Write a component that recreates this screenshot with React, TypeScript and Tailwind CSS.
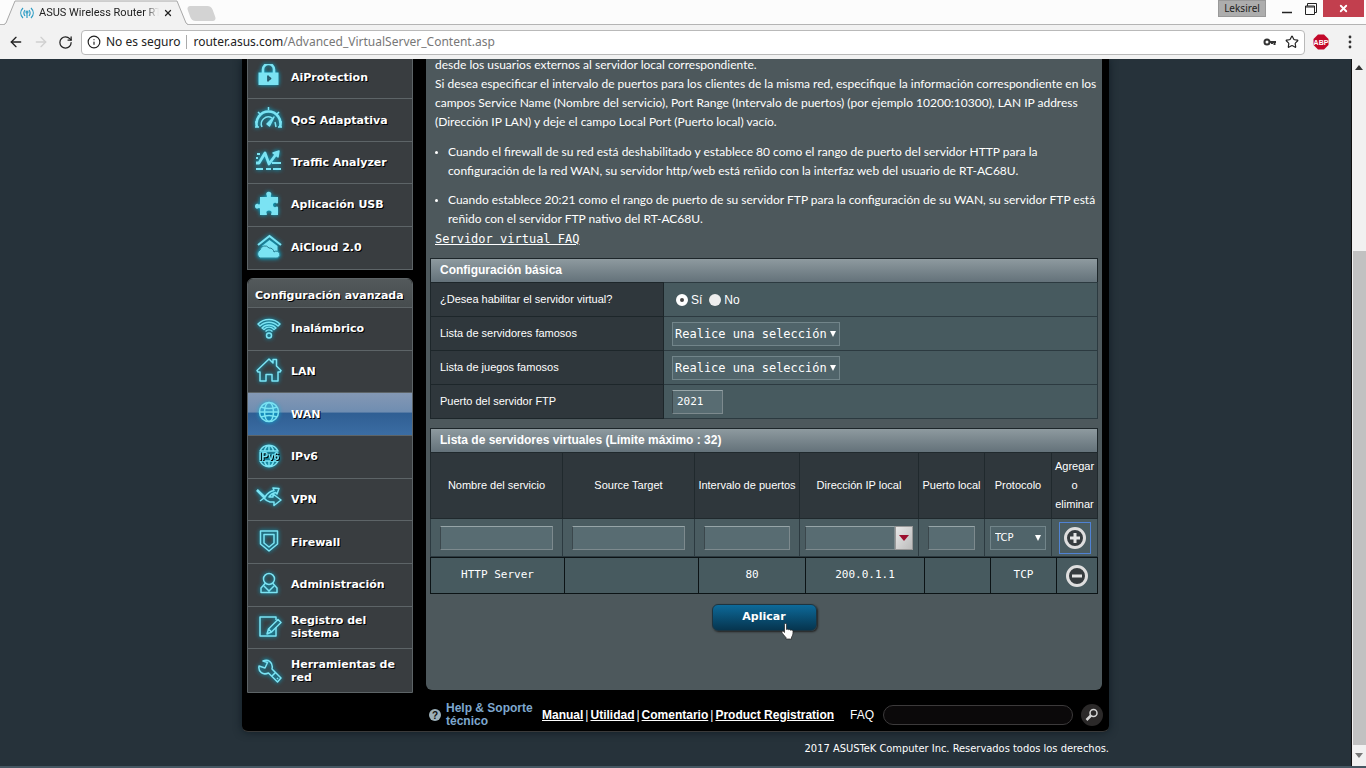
import { useState } from "react";
import type { ReactNode } from "react";
import { ArrowLeft, ArrowRight, Info, RotateCw, Star, X } from "lucide-react";

interface MenuItem {
    label: string;
    icon: ReactNode;
    active?: boolean;
}

const generalMenu: MenuItem[] = [
    {
        label: "AiProtection",
        icon: (
            <>
                <path d="M8 10V5.500a5.500 5.500 0 0 1 11 0V10" strokeWidth="2.6" />
                <path d="M3.500 8.500h20V21h-20z" fill="currentColor" stroke="none" />
                <path d="M13 11.500v6M13.500 13l2 1.500-2 1.500" stroke="#24586a" strokeWidth="1.8" />
            </>
        ),
    },
    {
        label: "QoS Adaptativa",
        icon: (
            <>
                <path d="M2 21a12 12 0 1 1 23 0" strokeWidth="2.600" />
                <path d="M7 21a7 7 0 0 1 10-9" strokeWidth="1.500" />
                <path d="M20 16l1 5" strokeWidth="1.500" />
                <path d="M13.500 4V1M5 8L3 6M22 8l2-2M2 16H0M25 16h2M0 21h4M23 21h4" strokeWidth="1.500" />
                <path d="M12 18l7-7-4.500 9z" fill="currentColor" />
            </>
        ),
    },
    {
        label: "Traffic Analyzer",
        icon: (
            <>
                <path d="M1 15h3l6-10 4 11 8-11" strokeWidth="2.800" />
                <path d="M18 5l6-2-1 6z" fill="currentColor" />
                <path d="M2 6h3M1 10h2M17 15h9M1 21h7M11 21h5M18 21h8" strokeWidth="2" />
            </>
        ),
    },
    {
        label: "Aplicación USB",
        icon: (
            <path
                d="M5 6h6c1 0 1.200-.8.700-1.600C10.500 2 12 .8 13.800.800S17 2 16 4.400c-.5.800-.2 1.600.700 1.600H23v5.500c0 1-1 1.200-1.700.7-2-1-3.300.2-3.300 1.800s1.500 2.800 3.300 1.800c.8-.5 1.700-.2 1.700.700V24h-6c-1 0-1.200-.8-.7-1.600 1-2-.5-3-2.300-3s-3.300 1-2.300 3c.5.800.3 1.600-.7 1.600H5v-6c0-1-.8-1.200-1.600-.7C1.500 18.300 0 17 0 15.200s1.500-3 3.400-2c.8.500 1.600.2 1.600-.700z"
                fill="currentColor"
                stroke="none"
            />
        ),
    },
    {
        label: "AiCloud 2.0",
        icon: (
            <>
                <path d="M3 11L14.500 2 26 11" strokeWidth="2.200" />
                <path d="M7 12l7.500-6 8 6v5H14z" fill="currentColor" stroke="none" />
                <path d="M5 24a4.500 4.500 0 0 1 0-8 5 5 0 0 1 9-2 5 5 0 0 1 5 4 3.500 3.500 0 1 1 1.500 6z" fill="currentColor" stroke="#2b7f92" strokeWidth="1" />
            </>
        ),
    },
];

const advancedMenu: MenuItem[] = [
    {
        label: "Inalámbrico",
        icon: (
            <>
                <path d="M3 9c6-6 16-6 22 0l-2 2c-5-5-13-5-18 0z" />
                <path d="M7 13c4-4 10-4 14 0l-2 1.500c-3-3-7-3-10 0z" />
                <path d="M10.500 16.500c2-2 5-2 7 0" />
                <circle cx="14" cy="20.500" r="2.500" />
            </>
        ),
    },
    {
        label: "LAN",
        icon: <path d="M2 13.500L14 2l4 4V2.500h3.500V9l4.500 4.500-1 1.500h-2v9h-6v-6.500h-6V24H5v-9H3z" />,
    },
    {
        label: "WAN",
        active: true,
        icon: (
            <>
                <circle cx="14" cy="12" r="9.500" />
                <ellipse cx="14" cy="12" rx="4.500" ry="9.500" />
                <path d="M4.500 12h19M6 7c5 2 11 2 16 0M6 17c5-2 11-2 16 0" />
            </>
        ),
    },
    {
        label: "IPv6",
        icon: (
            <>
                <path d="M5 8a10 10 0 0 1 18 0zM5 18a10 10 0 0 0 18 0zM14 2.500V8M14 18v5.500M9.500 8c.5-2.500 2-5 4.500-5.500 2.500.5 4 3 4.500 5.500M9.500 18c.5 2.500 2 5 4.500 5.500 2.500-.5 4-3 4.500-5.500" />
                <text x="14" y="16.500" fontSize="10" fontWeight="bold" textAnchor="middle" fill="currentColor" stroke="none" fontFamily="Liberation Sans, sans-serif">
                    IPv6
                </text>
            </>
        ),
    },
    {
        label: "VPN",
        icon: (
            <>
                <path d="M2 5l8 7c3-5 6-6 9-6.500L18 3l6 .5L22 9l-1.500-1.500c-3 .8-5 2-6.500 4.500h4V9l8 6-7 5.500V17h-4c-2.500-.5-4.500-2-6-4L5 16" />
                <path d="M2 5l8 8" strokeWidth="2.500" />
            </>
        ),
    },
    {
        label: "Firewall",
        icon: (
            <>
                <path d="M5.500 3h17v13L14 23l-8.500-7z" />
                <path d="M9 6.500h10V15l-5 4-5-4z" />
            </>
        ),
    },
    {
        label: "Administración",
        icon: (
            <>
                <circle cx="14" cy="8" r="5.500" />
                <path d="M10.500 12L6 17v4.500h16V17l-4.500-5M9 15l5 5 5-5" />
            </>
        ),
    },
    {
        label: "Registro del sistema",
        icon: (
            <>
                <path d="M21 14v9H5V4h16v3" />
                <path d="M12 21l1.500-5L23 6.500l3 3-9.500 9.500zM13.500 16l3 3" />
            </>
        ),
    },
    {
        label: "Herramientas de red",
        icon: (
            <>
                <path d="M4 9l6 2 2.500-5.500L8 4c5-2 10.500 1 9 8l9 9-3.500 4-9-9C8 18.500 3 15 4 9z" />
                <path d="M17 19l3.500-3.500M22 21l1 1" />
            </>
        ),
    },
];

const serverColumns = [
    { label: "Nombre del servicio", width: "w-[132px]" },
    { label: "Source Target", width: "w-[132px]" },
    { label: "Intervalo de puertos", width: "w-[105px]" },
    { label: "Dirección IP local", width: "w-[119px]" },
    { label: "Puerto local", width: "w-[66px]" },
    { label: "Protocolo", width: "w-[67px]" },
    { label: "Agregar o eliminar", width: "w-[46px]" },
];

const servers = [{ name: "HTTP Server", source: "", range: "80", ip: "200.0.1.1", port: "", protocol: "TCP" }];

const inputClass =
    "block h-[24px] w-full border border-[#7d8a8e] border-t-[#97a5a8] border-l-[#3b474c] bg-[#586c72] px-1 font-['DejaVu_Sans_Mono',monospace] text-[11px] text-white outline-none";

function BrowserBar() {
    return (
        <header className="shrink-0 bg-[#fcfcfc] font-['Noto_Sans',sans-serif] text-[#222]">
            <div className="flex h-[25px] items-start justify-between border-b border-[#b4b4b4]">
                <div className="flex">
                    <div className="relative ml-1 flex h-[25px] w-[184px] items-center gap-1 pl-4">
                        <svg className="absolute inset-0 h-full w-full" viewBox="0 0 184 25" aria-hidden="true">
                            <path d="M0 25L2 23 11 1h162l9 22 2 2z" fill="#f2f2f2" />
                            <path d="M0 24.500L2 23 11 1h162l9 22 2 1.500" fill="none" stroke="#a8a8a8" />
                        </svg>
                        <svg className="relative h-[14px] w-[14px] shrink-0 text-[#2d9cc4]" viewBox="0 0 14 14" fill="none" stroke="currentColor" strokeWidth="1.200" aria-hidden="true">
                            <path d="M3 2C0 5 0 9 3 12M5 4C3.500 6 3.500 8 5 10M11 2c3 3 3 7 0 10M9 4c1.500 2 1.500 4 0 6M7 7v5" />
                            <circle cx="7" cy="6" r="1" />
                        </svg>
                        <span className="relative w-[121px] pl-px font-['Roboto',sans-serif] text-[11px] leading-4 whitespace-nowrap [mask-image:linear-gradient(to_right,black_88%,transparent)]">
                            ASUS Wireless Router RT
                        </span>
                        <button type="button" aria-label="Cerrar pestaña" className="relative">
                            <X size={10} strokeWidth={3} />
                        </button>
                    </div>
                    <button type="button" aria-label="Nueva pestaña" className="mt-[6px] ml-px h-[15px] w-[25px] skew-x-[20deg] rounded-sm bg-[#d3d3d3]" />
                </div>
                <div className="flex items-start">
                    <span className="mr-[9px] h-[17px] w-[48px] border border-[#999] bg-[#adadad] text-center text-[10px] leading-[15px] text-[#222]">Leksirel</span>
                    <button type="button" aria-label="Minimizar" className="flex h-[17px] w-6 items-center justify-center">
                        <svg width="12" height="12" viewBox="0 0 12 12"><path d="M1 9.500h10" stroke="#222" strokeWidth="1.500" /></svg>
                    </button>
                    <button type="button" aria-label="Restaurar" className="flex h-[17px] w-6 items-center justify-center">
                        <svg width="12" height="12" viewBox="0 0 12 12" fill="none" stroke="#222"><path d="M.5 3h9v8.500h-9zM.5 4h9M2.500 3V.500h9v9h-2" /></svg>
                    </button>
                    <button type="button" aria-label="Cerrar" className="mr-[2px] flex h-[17px] w-[41px] items-center justify-center bg-[#c23f4e] text-white">
                        <X size={11} strokeWidth={4} />
                    </button>
                </div>
            </div>
            <div className="flex h-[34px] items-center bg-[#f2f2f2] pr-2 pl-2">
                <button type="button" aria-label="Atrás" className="mr-[9px]"><ArrowLeft size={16} /></button>
                <button type="button" aria-label="Adelante" className="mr-[9px] text-[#d0d0d0]"><ArrowRight size={16} /></button>
                <button type="button" aria-label="Recargar" className="mr-2"><RotateCw size={15} /></button>
                <div className="flex h-[25px] flex-1 items-center rounded-sm border border-[#b9b9b9] bg-white px-[5px]">
                    <Info size={14} className="mr-[5px]" />
                    <span className="text-[12px]">No es seguro</span>
                    <span className="mx-[6px] h-[14px] w-px bg-[#aaa]" />
                    <span className="flex-1 text-[12px] text-[#777]"><span className="text-[#222]">router.asus.com</span>/Advanced_VirtualServer_Content.asp</span>
                    <svg className="mr-2" width="14" height="14" viewBox="0 0 14 14" fill="none" stroke="#333" strokeWidth="2" aria-hidden="true"><circle cx="4" cy="7" r="2.500" /><path d="M6.500 7H13M11.500 7v3M9 7v2" /></svg>
                    <Star size={14} />
                </div>
                <button type="button" aria-label="Adblock Plus" className="ml-2">
                    <svg width="16" height="16" viewBox="0 0 16 16">
                        <path d="M5 .5h6L15.500 5v6L11 15.500H5L.5 11V5z" fill="#c3092a" />
                        <text x="8" y="10.500" fontSize="7" fontWeight="bold" textAnchor="middle" fill="#fff" fontFamily="Liberation Sans, sans-serif">ABP</text>
                    </svg>
                </button>
                <button type="button" aria-label="Menú" className="ml-[13px]">
                    <svg width="16" height="16" viewBox="0 0 16 16" fill="#333"><circle cx="8" cy="3" r="1.400" /><circle cx="8" cy="8" r="1.400" /><circle cx="8" cy="13" r="1.400" /></svg>
                </button>
            </div>
        </header>
    );
}

function MenuLink({ item }: { item: MenuItem }) {
    return (
        <a
            href="#"
            aria-current={item.active ? "page" : undefined}
            className={
                item.active
                    ? "flex items-center border-b border-[#5d6467] bg-[linear-gradient(to_bottom,#8498b4,#6f8db1_46%,#2f5e93_47%,#3b6da3)]"
                    : "flex items-center border-b border-[#5d6467] bg-[#393d40] last:border-b-0"
            }
        >
            <svg
                className="mr-2 ml-[7px] h-[28px] w-[28px] shrink-0 text-[#7be3f3] drop-shadow-[0_0_2px_#00b8e0]"
                viewBox="0 0 28 28"
                fill="none"
                stroke="currentColor"
                strokeWidth="1.500"
                strokeLinejoin="round"
                aria-hidden="true"
            >
                {item.icon}
            </svg>
            <span className="pr-1 leading-[13px]">{item.label}</span>
        </a>
    );
}

function Sidebar() {
    return (
        <nav className="-mt-[3px] -mb-[3px] w-[166px] shrink-0 font-['DejaVu_Sans',sans-serif] text-[11px] font-bold text-white [text-shadow:1px_1px_0_#000]">
            <div className="grid h-[214px] auto-rows-fr border border-[#5d6467]">
                {generalMenu.map((item) => (
                    <MenuLink key={item.label} item={item} />
                ))}
            </div>
            <div className="mt-2 overflow-hidden rounded-t-md border border-[#5d6467]">
                <h2 className="h-[29px] border-b border-[#5d6467] bg-linear-to-b from-[#53595b] to-[#464c4e] pl-[7px] leading-[34px] whitespace-nowrap">Configuración avanzada</h2>
                <div className="grid h-96 auto-rows-fr">
                    {advancedMenu.map((item) => (
                        <MenuLink key={item.label} item={item} />
                    ))}
                </div>
            </div>
        </nav>
    );
}

function SelectBox({ id }: { id: string }) {
    return (
        <div className="relative w-[168px]">
            <select id={id} className="block h-[24px] w-full appearance-none border border-[#72858a] bg-[#50646a] pl-[2px] font-['DejaVu_Sans_Mono',monospace] text-[12px] text-white">
                <option>Realice una selección</option>
            </select>
            <Caret className="absolute top-[9px] right-[4px]" />
        </div>
    );
}

function Caret({ className }: { className: string }) {
    return (
        <svg className={`pointer-events-none h-[6px] w-[6px] ${className}`} viewBox="0 0 6 6" fill="#fff" aria-hidden="true">
            <path d="M0 0h6L3 6z" />
        </svg>
    );
}

function SectionTitle({ children }: { children: ReactNode }) {
    return (
        <h3 className="h-[24px] border border-b-0 border-[#1d262a] bg-linear-to-b from-[#8e9a9f] to-[#64727a] pl-[9px] text-[12px] leading-[23px] font-bold">{children}</h3>
    );
}

function SettingRow({ label, htmlFor, children }: { label: string; htmlFor?: string; children: ReactNode }) {
    return (
        <tr className="h-[34px]">
            <th scope="row" className="w-[233px] border border-[#1d262a] bg-[#2f373c] pl-[9px] text-left font-normal">
                <label htmlFor={htmlFor}>{label}</label>
            </th>
            <td className="border border-[#2c3a40] bg-[#475a5f] pl-2">{children}</td>
        </tr>
    );
}

function BasicConfig() {
    const [enabled, setEnabled] = useState(true);
    const [ftpPort, setFtpPort] = useState("2021");
    const radioClass = "h-[12px] w-[12px] appearance-none rounded-full bg-[#eee] checked:border-[4px] checked:border-white checked:bg-[#444]";

    return (
        <section className="mt-[9px]">
            <SectionTitle>Configuración básica</SectionTitle>
            <table className="w-full border-collapse text-[11px]">
                <tbody>
                    <SettingRow label="¿Desea habilitar el servidor virtual?" htmlFor="vs-on">
                        <div className="flex items-center gap-[3px] pl-1 text-[12px]">
                            <input id="vs-on" type="radio" name="vs" checked={enabled} onChange={() => setEnabled(true)} className={radioClass} />
                            <label htmlFor="vs-on" className="mr-1">Sí</label>
                            <input id="vs-off" type="radio" name="vs" checked={!enabled} onChange={() => setEnabled(false)} className={radioClass} />
                            <label htmlFor="vs-off">No</label>
                        </div>
                    </SettingRow>
                    <SettingRow label="Lista de servidores famosos" htmlFor="famous-servers">
                        <SelectBox id="famous-servers" />
                    </SettingRow>
                    <SettingRow label="Lista de juegos famosos" htmlFor="famous-games">
                        <SelectBox id="famous-games" />
                    </SettingRow>
                    <SettingRow label="Puerto del servidor FTP" htmlFor="ftp-port">
                        <div className="w-[51px]">
                            <input id="ftp-port" type="text" value={ftpPort} onChange={(e) => setFtpPort(e.target.value)} className={inputClass} />
                        </div>
                    </SettingRow>
                </tbody>
            </table>
        </section>
    );
}

function RoundIcon({ plus }: { plus?: boolean }) {
    return (
        <svg className="h-[24px] w-[24px]" viewBox="0 0 24 24" fill="none" aria-hidden="true">
            <circle cx="12" cy="12" r="9.500" fill="#363c3f" stroke="#dedede" strokeWidth="3" />
            <path d={plus ? "M7 12h10M12 7v10" : "M7 12h10"} stroke="#e6e6e6" strokeWidth="3" />
        </svg>
    );
}

function ServerList() {
    const headCell = "border border-[#20292d] bg-[#2f373c] px-0 font-normal leading-[19px]";
    const editCell = "border border-[#2c3a40] bg-[#4a5c61] px-[9px]";
    const dataCell = "border border-[#0c1315] bg-[#475a5f]";

    return (
        <section className="mt-[9px]">
            <SectionTitle>Lista de servidores virtuales (Límite máximo : 32)</SectionTitle>
            <table className="w-full table-fixed border-collapse text-center text-[11px]">
                <thead>
                    <tr className="h-[66px]">
                        {serverColumns.map((col) => (
                            <th key={col.label} scope="col" className={`${headCell} ${col.width}`}>{col.label}</th>
                        ))}
                    </tr>
                </thead>
                <tbody>
                    <tr className="h-[38px]">
                        <td className={editCell}><input type="text" aria-label="Nombre del servicio" className={inputClass} /></td>
                        <td className={editCell}><input type="text" aria-label="Source Target" className={inputClass} /></td>
                        <td className={editCell}><input type="text" aria-label="Intervalo de puertos" className={inputClass} /></td>
                        <td className="border border-[#2c3a40] bg-[#4a5c61] px-[5px]">
                            <div className="flex">
                                <input type="text" aria-label="Dirección IP local" className={inputClass} />
                                <button type="button" aria-label="Mostrar clientes" className="flex h-[24px] w-[18px] shrink-0 items-center justify-center border border-[#999] bg-linear-to-br from-[#e8e8e8] to-[#bcbcbc]">
                                    <svg width="10" height="6" viewBox="0 0 10 6"><path d="M0 0h10L5 6z" fill="#9c0f2e" /></svg>
                                </button>
                            </div>
                        </td>
                        <td className={editCell}><input type="text" aria-label="Puerto local" className={inputClass} /></td>
                        <td className="border border-[#2c3a40] bg-[#4a5c61] px-[5px]">
                            <div className="relative">
                                <select aria-label="Protocolo" className="block h-[24px] w-full appearance-none border border-[#72858a] bg-[#50646a] pl-1 font-['DejaVu_Sans',sans-serif] text-[10px] text-white">
                                    <option>TCP</option>
                                    <option>UDP</option>
                                    <option>BOTH</option>
                                </select>
                                <Caret className="absolute top-[9px] right-[5px]" />
                            </div>
                        </td>
                        <td className="border border-[#2c3a40] bg-[#4a5c61]">
                            <button type="button" aria-label="Agregar" className="mx-auto flex h-[32px] w-[32px] items-center justify-center border border-[#4f82d4]"><RoundIcon plus /></button>
                        </td>
                    </tr>
                </tbody>
            </table>
            <table aria-label="Servidores virtuales" className="w-full table-fixed border-collapse text-center font-['DejaVu_Sans_Mono',monospace] text-[11px]">
                <tbody>
                    {servers.map((s) => (
                        <tr key={s.name} className="h-[36px]">
                            <td className={`${dataCell} w-[134px]`}>{s.name}</td>
                            <td className={`${dataCell} w-[134px]`}>{s.source}</td>
                            <td className={`${dataCell} w-[107px]`}>{s.range}</td>
                            <td className={`${dataCell} w-[119px]`}>{s.ip}</td>
                            <td className={`${dataCell} w-[66px]`}>{s.port}</td>
                            <td className={`${dataCell} w-[66px]`}>{s.protocol}</td>
                            <td className={`${dataCell} w-[41px]`}>
                                <button type="button" aria-label="Eliminar" className="mx-auto flex"><RoundIcon /></button>
                            </td>
                        </tr>
                    ))}
                </tbody>
            </table>
        </section>
    );
}

function Description() {
    return (
        <div className="px-[5px] font-['Lato','Liberation_Sans',sans-serif] text-[12px] leading-[19px] whitespace-nowrap">
            <p>
                desde los usuarios externos al servidor local correspondiente.<br />
                Si desea especificar el intervalo de puertos para los clientes de la misma red, especifique la información correspondiente en los<br />
                campos Service Name (Nombre del servicio), Port Range (Intervalo de puertos) (por ejemplo 10200:10300), LAN IP address<br />
                (Dirección IP LAN) y deje el campo Local Port (Puerto local) vacío.
            </p>
            <ul className="mt-[11px] list-disc space-y-[10px] pl-[13px] marker:text-[9px]">
                <li>
                    Cuando el firewall de su red está deshabilitado y establece 80 como el rango de puerto del servidor HTTP para la<br />
                    configuración de la red WAN, su servidor http/web está reñido con la interfaz web del usuario de RT-AC68U.
                </li>
                <li>
                    Cuando establece 20:21 como el rango de puerto de su servidor FTP para la configuración de su WAN, su servidor FTP está<br />
                    reñido con el servidor FTP nativo del RT-AC68U.
                </li>
            </ul>
            <a href="#" className="mt-[2px] block w-fit font-['DejaVu_Sans_Mono',monospace] underline">Servidor virtual FAQ</a>
        </div>
    );
}

function Footer() {
    const links = ["Manual", "Utilidad", "Comentario", "Product Registration"];

    return (
        <footer className="flex h-[41px] items-center pt-2 pr-[6px] pl-[187px] text-[12px]">
            <svg className="mr-[5px] h-[12px] w-[12px] shrink-0" viewBox="0 0 12 12" aria-hidden="true">
                <circle cx="6" cy="6" r="6" fill="#9db1ba" />
                <text x="6" y="9.500" fontSize="10" fontWeight="bold" textAnchor="middle" fill="#111" fontFamily="Liberation Sans, sans-serif">?</text>
            </svg>
            <a href="#" className="w-24 leading-[13px] font-bold text-[#7ea8cf]">Help &amp; Soporte técnico</a>
            <div className="flex gap-[2px] whitespace-nowrap">
                {links.map((link, i) => (
                    <span key={link} className="flex gap-[2px]">
                        {i > 0 && <span>|</span>}
                        <a href="#" className="font-bold underline">{link}</a>
                    </span>
                ))}
            </div>
            <label htmlFor="faq" className="ml-auto">FAQ</label>
            <input id="faq" type="text" className="ml-[9px] h-[20px] w-[190px] rounded-[10px] border border-[#3c3a3b] bg-[#0b090a] px-2 outline-none" />
            <button type="button" aria-label="Buscar" className="ml-2 flex h-[22px] w-[22px] items-center justify-center rounded-full bg-[#2b2929]">
                <svg width="14" height="14" viewBox="0 0 14 14" fill="none" stroke="#d5d5d5" aria-hidden="true"><circle cx="8.500" cy="5" r="3.500" strokeWidth="1.500" /><path d="M6 7.500L1.500 12" strokeWidth="2.500" /></svg>
            </button>
        </footer>
    );
}

function ScrollBar() {
    return (
        <div className="flex w-[15px] shrink-0 flex-col items-center border-l border-[#111] bg-[#f1f1f1]" aria-hidden="true">
            <div className="flex h-[17px] items-center"><svg width="8" height="5" viewBox="0 0 8 5"><path d="M0 5h8L4 0z" fill="#333" /></svg></div>
            <div className="flex-[176]" />
            <div className="w-[13px] flex-[495] bg-[#c1c1c1]" />
            <div className="flex h-[21px] items-center"><svg width="8" height="5" viewBox="0 0 8 5"><path d="M0 0h8L4 5z" fill="#777" /></svg></div>
        </div>
    );
}

export default function App() {
    return (
        <div className="flex h-screen flex-col overflow-hidden bg-[#26323a]">
            <BrowserBar />
            <div className="flex min-h-0 flex-1 border-b-2 border-[#455762]">
                <main className="flex-1 overflow-hidden font-['Liberation_Sans',sans-serif] text-white">
                    <div className="mx-auto w-[867px] rounded-b-md border-b border-[#3a3a3a] bg-black shadow-[0_0_8px_#101c24]">
                        <div className="flex items-stretch justify-between pr-[7px] pl-[5px]">
                            <Sidebar />
                            <div className="w-[676px] rounded-b-md bg-[#4d585c] px-1">
                                <div className="-mt-[4px]"><Description /></div>
                                <BasicConfig />
                                <ServerList />
                                <div className="flex justify-center pt-[10px] pb-[58px]">
                                    <button type="button" className="relative h-[27px] w-[105px] rounded-md border border-[#1d3440] bg-linear-to-b from-[#0d6a9a] to-[#06354f] font-['DejaVu_Sans',sans-serif] text-[11px] font-bold shadow-[1px_1px_2px_#222]">
                                        Aplicar
                                        <svg className="absolute top-[18px] left-[68px] h-[17px] w-[13px]" viewBox="0 0 13 17" fill="#fff" stroke="#222" strokeWidth=".7" aria-hidden="true">
                                            <path d="M3.500 1.500c0-1.300 2-1.300 2 0v5c.8-.6 1.700-.4 2 .3.700-.5 1.700-.3 2 .5 1-.6 2.500 0 2.500 1.200 0 3-.5 4.500-1.500 5.500v2H5v-1.500C3.500 13 1.500 10.500 1 9.500c-.5-1 .8-1.700 1.600-.9l.9.9z" />
                                        </svg>
                                    </button>
                                </div>
                            </div>
                        </div>
                        <Footer />
                    </div>
                    <p className="mx-auto w-[867px] pt-2 text-right font-['DejaVu_Sans_Condensed','DejaVu_Sans',sans-serif] text-[11px] leading-[18px]">2017 ASUSTeK Computer Inc. Reservados todos los derechos.</p>
                </main>
                <ScrollBar />
            </div>
        </div>
    );
}
